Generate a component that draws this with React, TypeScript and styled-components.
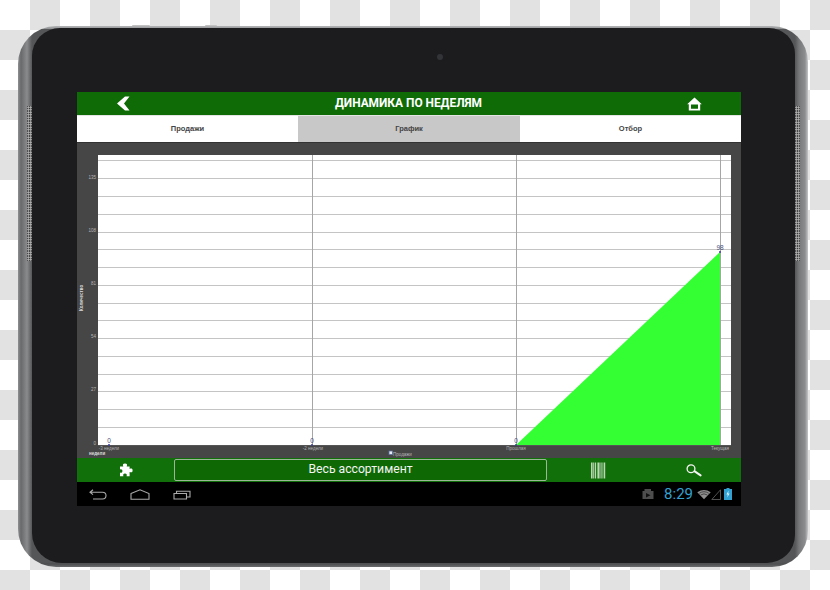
import React from 'react';
import styled, { createGlobalStyle } from 'styled-components';

const GlobalStyle = createGlobalStyle`
  html, body {
    margin: 0;
    padding: 0;
  }
  body {
    width: 830px;
    height: 590px;
    overflow: hidden;
    font-family: "Liberation Sans", Arial, sans-serif;
  }
`;

const Page = styled.div`
  box-sizing: border-box;
  width: 830px;
  height: 590px;
  padding: 26px 22px 23px 18px;
  background-color: #fff;
  background-image: conic-gradient(
    #e2e2e2 0 25%,
    #fff 0 50%,
    #e2e2e2 0 75%,
    #fff 0
  );
  background-size: 60px 60px;
`;

const Device = styled.div`
  position: relative;
  box-sizing: border-box;
  height: 100%;
  padding: 2px 13px 4px 14px;
  border-radius: 38px 36px 36px 38px;
  background:
    linear-gradient(180deg, #b4b5b6 0, #8d8e90 3px, transparent 3px),
    linear-gradient(0deg, #6a6b6c 0, #4e4f50 3px, transparent 5px),
    linear-gradient(
      90deg,
      #8f9092 0,
      #68696b 3px,
      #8a8b8d 9px,
      #555658 14px,
      #555658 calc(100% - 13px),
      #77787a calc(100% - 9px),
      #8c8d8f calc(100% - 3px),
      #c4c5c6 100%
    );
`;

const Bezel = styled.div`
  position: relative;
  box-sizing: border-box;
  height: 100%;
  padding: 64px 54px 0 45px;
  border-radius: 28px 26px 28px 30px;
  background: #1c1c1e;
`;

const Camera = styled.span`
  position: absolute;
  top: 26px;
  left: 405px;
  width: 6px;
  height: 6px;
  border-radius: 50%;
  background: #333438;
`;

const Grille = styled.span<{ $side: 'left' | 'right' }>`
  position: absolute;
  top: 80px;
  ${(p) => (p.$side === 'left' ? 'left: 9px;' : 'right: 8px;')}
  width: 5px;
  height: 155px;
  background-color: #3a3a3a;
  background-image: radial-gradient(circle, #b8b8b8 0.9px, transparent 1.1px);
  background-size: 2.5px 2.5px;
`;

const SideKey = styled.span<{ $left: number; $width: number }>`
  position: absolute;
  top: -1px;
  left: ${(p) => p.$left}px;
  width: ${(p) => p.$width}px;
  height: 1px;
  border-radius: 2px 2px 0 0;
  background: #c2c2c2;
`;

const Screen = styled.div`
  display: flex;
  flex-direction: column;
  width: 664px;
  height: 414px;
  background: #000;
`;

const Header = styled.header`
  flex: 0 0 23px;
  display: flex;
  align-items: center;
  justify-content: space-between;
  padding: 0 39px;
  background: #0e6b06;
`;

const Title = styled.h1`
  margin: 0;
  color: #fff;
  font-family: Roboto, "Liberation Sans", sans-serif;
  font-size: 11.9px;
  font-weight: 700;
  line-height: 23px;
`;

const Tabs = styled.nav`
  flex: 0 0 28px;
  display: grid;
  grid-template-columns: 221px 222px 221px;
  box-sizing: border-box;
  border-top: 1px solid #e4e4e4;
  border-bottom: 1px solid #333;
`;

const Tab = styled.div<{ $active?: boolean }>`
  display: flex;
  align-items: center;
  justify-content: center;
  padding-bottom: 1px;
  background: ${(p) => (p.$active ? '#c8c8c8' : '#fff')};
  color: #444;
  font-size: 7.5px;
  font-weight: 700;
`;

const ChartPanel = styled.section`
  flex: 0 0 315px;
  background: #464646;
`;

const ChartSvg = styled.svg`
  display: block;
`;

const AxisText = styled.text<{ $bold?: boolean }>`
  fill: ${(p) => (p.$bold ? '#dcdcdc' : '#b5b5b5')};
  font-size: 4.5px;
  font-weight: ${(p) => (p.$bold ? 700 : 400)};
  font-family: "Liberation Sans", Arial, sans-serif;
`;

const ValueText = styled.text`
  fill: #4a4f78;
  font-size: 6.5px;
  font-family: "Liberation Sans", Arial, sans-serif;
`;

const Footer = styled.footer`
  flex: 0 0 24px;
  display: grid;
  grid-template-columns: 97px 373px 102px 89px;
  align-items: center;
  background: #12700a;
`;

const FooterIcon = styled.div`
  display: flex;
  align-items: center;
  justify-content: center;
`;

const Assortment = styled.div`
  box-sizing: border-box;
  height: 22px;
  border: 1px solid #9ab896;
  border-radius: 2px;
  background: #0e6905;
  color: #f4f4f4;
  font-family: Roboto, "Liberation Sans", sans-serif;
  font-size: 12.2px;
  line-height: 19px;
  text-align: center;
`;

const SystemBar = styled.div`
  flex: 1;
  display: flex;
  align-items: center;
  justify-content: space-between;
  padding: 0 9px 0 12px;
  background: #000;
`;

const NavKeys = styled.div`
  display: flex;
  align-items: center;
  gap: 23px;
`;

const StatusIcons = styled.div`
  display: flex;
  align-items: center;
`;

const Clock = styled.span`
  margin: 0 4px 0 10px;
  color: #33a0d2;
  font-family: Roboto, "Liberation Sans", sans-serif;
  font-size: 15px;
  line-height: 1;
`;

const gridLines = [17, 35, 53, 71, 89, 106, 124, 142, 160, 177, 195, 213, 231, 248, 266, 284];
const yLabels = [
  { text: '135', y: 36 },
  { text: '108', y: 89 },
  { text: '81', y: 142 },
  { text: '54', y: 195 },
  { text: '27', y: 248 },
  { text: '0', y: 302 },
];
const weekLines = [235, 439, 643];
const xLabels = [
  { text: '-3 недели', x: 32 },
  { text: '-2 недели', x: 236 },
  { text: 'Прошлая', x: 439 },
  { text: 'Текущая', x: 643 },
];

const SalesChart: React.FC = () => (
  <ChartSvg width="664" height="315" viewBox="0 0 664 315">
    <rect x="21" y="12" width="633" height="290" fill="#fff" />
    {gridLines.map((y) => (
      <line key={y} x1="21" x2="654" y1={y + 0.5} y2={y + 0.5} stroke="#c4c4c4" />
    ))}
    {weekLines.map((x) => (
      <line key={x} x1={x + 0.5} x2={x + 0.5} y1="12" y2="302" stroke="#a6a6a6" />
    ))}
    <polygon points="439,302 643,109 643,302" fill="#33ff33" />
    <line x1="21" x2="654" y1="302.5" y2="302.5" stroke="#555" />
    {yLabels.map((l) => (
      <AxisText key={l.text} x="19" y={l.y} textAnchor="end">
        {l.text}
      </AxisText>
    ))}
    {xLabels.map((l) => (
      <AxisText key={l.text} x={l.x} y="307" textAnchor="middle">
        {l.text}
      </AxisText>
    ))}
    <AxisText $bold x="12" y="312">
      недели
    </AxisText>
    <AxisText $bold x="0" y="0" transform="translate(5.5 168) rotate(-90)">
      Количество
    </AxisText>
    <rect x="312" y="308" width="3.5" height="3.5" fill="#e8ecf4" stroke="#5b6a9a" strokeWidth="0.8" />
    <AxisText x="316" y="313">
      Продажи
    </AxisText>
    {[32, 235, 439].map((x) => (
      <ValueText key={x} x={x} y="300" textAnchor="middle">
        0
      </ValueText>
    ))}
    <ValueText x="643" y="107" textAnchor="middle">
      98
    </ValueText>
    {[32, 235, 439, 643].map((x) => (
      <circle key={x} cx={x} cy={x === 643 ? 109 : 302} r="1" fill="#3a3aa0" />
    ))}
  </ChartSvg>
);

const BackIcon = () => (
  <svg width="14" height="15" viewBox="0 0 14 15">
    <path d="M9 0.5h4.5L8 7.5l5.5 7H9L1 7.5z" fill="#fff" />
  </svg>
);

const HomeIcon = () => (
  <svg width="15" height="14" viewBox="0 0 15 14">
    <path fillRule="evenodd" d="M7.5 0.5L14.8 7.2H13.2V13.5H1.8V7.2H0.2zM4 7.5V11.8H11V7.5z" fill="#fff" />
  </svg>
);

const PuzzleIcon = () => (
  <svg width="14" height="14" viewBox="0 0 14 14">
    <path
      d="M1 3.5H4.3C3.4 1.6 4 0.4 6 0.4C8 0.4 8.6 1.6 7.7 3.5H10.6V5.9C12.4 5 13.6 5.6 13.6 7.4C13.6 9.2 12.4 9.8 10.6 8.9V13.2H7.6C8.2 11.4 7.6 10.6 6 10.6C4.4 10.6 3.8 11.4 4.4 13.2H1V9.6C2.6 10.2 3.4 9.4 3.4 8C3.4 6.6 2.6 5.8 1 6.4z"
      fill="#fff"
    />
  </svg>
);

const BarcodeIcon = () => (
  <svg width="15" height="17" viewBox="0 0 15 17">
    {[0, 2.2, 4, 6.4, 8.4, 10.4, 12.6].map((x, i) => (
      <rect key={x} x={x} y="0.5" width={i % 3 === 0 ? 1.6 : 1.1} height="16" fill="#bcd6b6" />
    ))}
  </svg>
);

const SearchIcon = () => (
  <svg width="16" height="13" viewBox="0 0 16 13">
    <circle cx="5" cy="4.8" r="3.9" fill="none" stroke="#f4f4f4" strokeWidth="1.3" />
    <path d="M8.4 7.2L14.6 11.4" stroke="#f4f4f4" strokeWidth="2" strokeLinecap="round" />
  </svg>
);

const BackKey = () => (
  <svg width="18" height="11" viewBox="0 0 18 11">
    <path d="M4 0.8L1 3.2L4 5.6M1 3.2H13.5Q17 3.2 17 6.6Q17 10 13.5 10H4" fill="none" stroke="#aaa" strokeWidth="1.1" />
  </svg>
);

const HomeKey = () => (
  <svg width="20" height="11" viewBox="0 0 20 11">
    <path d="M1 4.5L10 0.8L19 4.5V10.3H1z" fill="none" stroke="#aaa" strokeWidth="1.1" />
  </svg>
);

const RecentKey = () => (
  <svg width="18" height="11" viewBox="0 0 18 11">
    <path d="M1 4.5H13.5V10H1zM3.5 4.5V2.2H17V8H13.5" fill="none" stroke="#aaa" strokeWidth="1.1" />
  </svg>
);

const PhotoStatus = () => (
  <svg width="12" height="12" viewBox="0 0 12 12">
    <path d="M0.5 3H2.5V1H9V3H11.5V11H0.5z" fill="#4d4d4d" />
    <path d="M4 5L8.5 7.2L4 9.4z" fill="#111" />
  </svg>
);

const WifiStatus = () => (
  <svg width="14" height="11" viewBox="0 0 15 11">
    <path d="M7.5 10.5L0.3 3.2Q7.5 -1.8 14.7 3.2z" fill="#8f8f8f" />
    <path d="M2.4 4.2Q7.5 0.8 12.6 4.2M4 6Q7.5 3.6 11 6" fill="none" stroke="#222" strokeWidth="0.7" />
  </svg>
);

const SignalStatus = () => (
  <svg width="10" height="11" viewBox="0 0 10 11">
    <path d="M0.8 10.5L9.5 0.8V10.5z" fill="none" stroke="#666" strokeWidth="0.8" />
  </svg>
);

const BatteryStatus = () => (
  <svg width="8" height="12" viewBox="0 0 8 12" style={{ marginLeft: 3 }}>
    <path d="M2.5 0H5.5V1H8V12H0V1H2.5z" fill="#33a0d2" />
    <path d="M4.6 2.5L2.4 6.6H3.8L3.2 9.6L5.6 5.4H4.2z" fill="#dff2fb" />
  </svg>
);

const App: React.FC = () => (
  <>
    <GlobalStyle />
    <Page>
      <Device>
        <SideKey $left={114} $width={18} />
        <SideKey $left={187} $width={12} />
        <Grille $side="left" />
        <Grille $side="right" />
        <Bezel>
          <Camera />
          <Screen>
            <Header>
              <BackIcon />
              <Title>ДИНАМИКА ПО НЕДЕЛЯМ</Title>
              <HomeIcon />
            </Header>
            <Tabs>
              <Tab>Продажи</Tab>
              <Tab $active>График</Tab>
              <Tab>Отбор</Tab>
            </Tabs>
            <ChartPanel>
              <SalesChart />
            </ChartPanel>
            <Footer>
              <FooterIcon>
                <PuzzleIcon />
              </FooterIcon>
              <Assortment>Весь ассортимент</Assortment>
              <FooterIcon>
                <BarcodeIcon />
              </FooterIcon>
              <FooterIcon>
                <SearchIcon />
              </FooterIcon>
            </Footer>
            <SystemBar>
              <NavKeys>
                <BackKey />
                <HomeKey />
                <RecentKey />
              </NavKeys>
              <StatusIcons>
                <PhotoStatus />
                <Clock>8:29</Clock>
                <WifiStatus />
                <SignalStatus />
                <BatteryStatus />
              </StatusIcons>
            </SystemBar>
          </Screen>
        </Bezel>
      </Device>
    </Page>
  </>
);

export default App;
